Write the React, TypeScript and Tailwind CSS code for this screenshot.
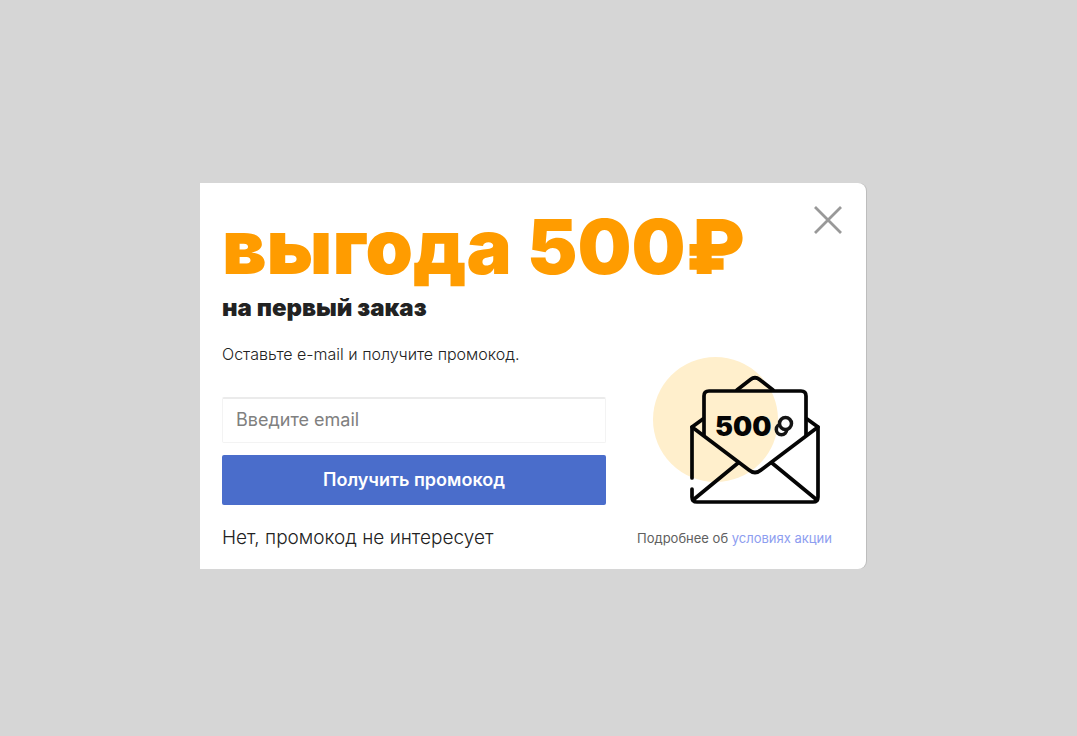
function CloseIcon() {
  return (
    <svg viewBox="0 0 28 28" className="size-7" fill="none" stroke="#999999" strokeWidth="2.8" aria-hidden="true">
      <path d="M1 1 27 27M27 1 1 27" />
    </svg>
  );
}

function EnvelopeIllustration() {
  return (
    <svg viewBox="652 356 170 150" className="mr-2.5 h-[150px] w-[170px]" role="img" aria-label="500">
      <circle cx="715.5" cy="419.5" r="62.5" fill="#ffefcc" />
      <g fill="none" stroke="#050505" strokeWidth="3.7" strokeLinecap="round" strokeLinejoin="round">
        <path d="M737 390 750.5 379.5Q755 376 759.5 379.5L773 390" />
        <path d="M704 435V396Q704 391 709 391H801Q806 391 806 396V435" />
        <path d="M703 419 692 427L749 470Q755 475 761 470L818 427L807 419" />
        <path d="M692 427V478" />
        <path d="M692 489V497Q692 502 697 502H813Q818 502 818 497V427" />
        <path d="M738 463 693 500M772 463 817 500" />
      </g>
      <circle cx="781.5" cy="429.5" r="5.2" fill="none" stroke="#151515" strokeWidth="3.5" />
      <circle cx="785.5" cy="423.5" r="6" fill="#ffffff" stroke="#151515" strokeWidth="3.5" />
      <text x="715" y="436" fontSize="27" fontWeight="900" fill="#050505">
        500
      </text>
    </svg>
  );
}

export default function App() {
  return (
    <main className="flex min-h-screen items-center justify-center bg-[#d6d6d6] pt-4 pr-[11px] font-['Inter','Liberation_Sans',sans-serif] text-[#222222]">
      <section
        role="dialog"
        aria-labelledby="promo-title"
        className="w-full max-w-[666px] rounded-r-lg bg-white px-[22px] pt-[23px] pb-[17px] shadow-[1px_0_0_#bdbdbd]"
      >
        <header className="flex items-start justify-between">
          <div>
            <h1 id="promo-title" className="text-[76px] leading-20 font-black whitespace-nowrap text-[#ff9c00]">
              выгода 500₽
            </h1>
            <p className="mt-1 text-2xl leading-9 font-black">на первый заказ</p>
          </div>
          <button type="button" aria-label="Закрыть" className="mr-0.5 cursor-pointer">
            <CloseIcon />
          </button>
        </header>

        <div className="flex justify-between pt-4">
          <form className="flex w-96 flex-col items-stretch" onSubmit={(event) => event.preventDefault()}>
            <label htmlFor="email" className="text-base leading-6 font-light">
              Оставьте e-mail и получите промокод.
            </label>
            <input
              id="email"
              type="email"
              placeholder="Введите email"
              className="mt-[31px] h-[46px] rounded-xs border border-t-2 border-[#f3f3f3] border-t-[#ebebeb] px-[13px] pb-0.5 text-lg placeholder:text-[#808080] focus:outline-none"
            />
            <button type="submit" className="mt-3 h-[50px] cursor-pointer rounded-xs bg-[#4a6dcb] text-lg font-semibold text-white">
              Получить промокод
            </button>
            <button type="button" className="mt-[19px] cursor-pointer self-start text-[19px] leading-7 font-light">
              Нет, промокод не интересует
            </button>
          </form>

          <aside className="flex flex-col items-end justify-between pt-3.5 pr-3">
            <EnvelopeIllustration />
            <p className="text-[13px] leading-7 whitespace-nowrap text-[#606060]">
              Подробнее об{" "}
              <a href="#terms" className="text-[#8d9df0]">
                условиях акции
              </a>
            </p>
          </aside>
        </div>
      </section>
    </main>
  );
}
